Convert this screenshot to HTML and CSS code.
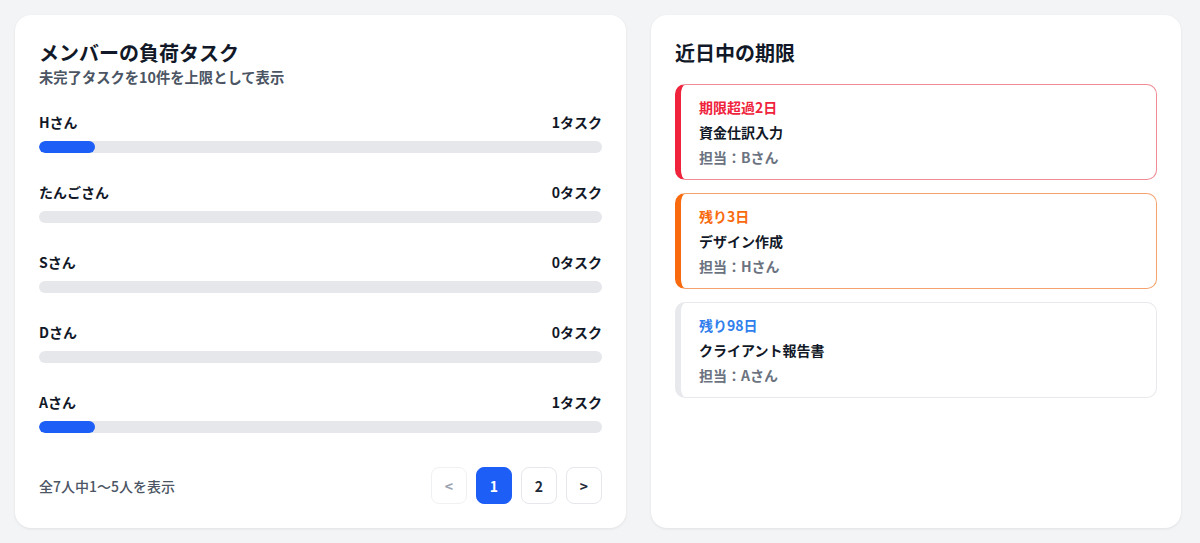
FILE: index.html
```html
<!DOCTYPE html>
<html lang="ja">
<head>
  <meta charset="utf-8">
  <title>ダッシュボード</title>
  <link rel="stylesheet" href="styles.css">
</head>
<body>
  <div class="dashboard">
    <section class="card workload">
      <h2 class="card-title">メンバーの負荷タスク</h2>
      <p class="card-sub">未完了タスクを10件を上限として表示</p>

      <div class="member-list">
        <div class="member">
          <div class="member-head"><span>Hさん</span><span>1タスク</span></div>
          <div class="bar"><div class="bar-fill" style="width: 10%"></div></div>
        </div>
        <div class="member">
          <div class="member-head"><span>たんごさん</span><span>0タスク</span></div>
          <div class="bar"><div class="bar-fill" style="width: 0%"></div></div>
        </div>
        <div class="member">
          <div class="member-head"><span>Sさん</span><span>0タスク</span></div>
          <div class="bar"><div class="bar-fill" style="width: 0%"></div></div>
        </div>
        <div class="member">
          <div class="member-head"><span>Dさん</span><span>0タスク</span></div>
          <div class="bar"><div class="bar-fill" style="width: 0%"></div></div>
        </div>
        <div class="member">
          <div class="member-head"><span>Aさん</span><span>1タスク</span></div>
          <div class="bar"><div class="bar-fill" style="width: 10%"></div></div>
        </div>
      </div>

      <div class="list-footer">
        <span class="count">全7人中1〜5人を表示</span>
        <div class="pager">
          <button class="page-btn" disabled>&lt;</button>
          <button class="page-btn active">1</button>
          <button class="page-btn">2</button>
          <button class="page-btn">&gt;</button>
        </div>
      </div>
    </section>

    <section class="card deadlines">
      <h2 class="card-title">近日中の期限</h2>
      <div class="deadline-list">
        <div class="deadline overdue">
          <div class="deadline-label">期限超過2日</div>
          <div class="deadline-task">資金仕訳入力</div>
          <div class="deadline-owner">担当：Bさん</div>
        </div>
        <div class="deadline soon">
          <div class="deadline-label">残り3日</div>
          <div class="deadline-task">デザイン作成</div>
          <div class="deadline-owner">担当：Hさん</div>
        </div>
        <div class="deadline later">
          <div class="deadline-label">残り98日</div>
          <div class="deadline-task">クライアント報告書</div>
          <div class="deadline-owner">担当：Aさん</div>
        </div>
      </div>
    </section>
  </div>
</body>
</html>
```

FILE: styles.css
```css
:root {
  --bg: #f3f4f6;
  --card-bg: #ffffff;
  --text: #111827;
  --muted: #4b5563;
  --blue: #1d5ef7;
  --track: #e5e7eb;
}

body {
  margin: 0;
  background-color: var(--bg);
  font-family: "Noto Sans CJK JP", "Noto Sans", sans-serif;
  color: var(--text);
}

.dashboard {
  display: grid;
  grid-template-columns: 611px 530px;
  gap: 25px;
  padding: 15px 19px 15px 15px;
  height: 513px;
}

.card {
  background-color: var(--card-bg);
  border-radius: 16px;
  padding: 24px;
  box-shadow: 0 1px 3px rgba(0, 0, 0, 0.08);
  display: flex;
  flex-direction: column;
}

.card-title {
  margin: 0;
  font-size: 20px;
  line-height: 28px;
  font-weight: 700;
}

.card-sub {
  margin: 0;
  font-size: 14.3px;
  line-height: 20px;
  font-weight: 600;
  color: var(--muted);
}

/* member workload */
.member-list {
  margin-top: 25px;
  display: flex;
  flex-direction: column;
  gap: 29px;
}

.member-head {
  display: flex;
  justify-content: space-between;
  font-size: 14px;
  line-height: 20px;
  font-weight: 700;
}

.bar {
  margin-top: 9px;
  height: 12px;
  background-color: var(--track);
  border-radius: 6px;
  overflow: hidden;
}

.bar-fill {
  height: 100%;
  background-color: var(--blue);
  border-radius: 6px;
}

.list-footer {
  margin-top: auto;
  display: flex;
  justify-content: space-between;
  align-items: center;
}

.count {
  font-size: 14px;
  color: var(--muted);
  font-weight: 500;
}

.pager {
  display: flex;
  gap: 9px;
}

.page-btn {
  width: 36px;
  height: 37px;
  border: 1px solid var(--track);
  border-radius: 8px;
  background-color: #fff;
  color: #1f2937;
  font-family: inherit;
  font-size: 14px;
  font-weight: 700;
  padding: 0;
}

.page-btn:disabled {
  color: #9ca3af;
  border-color: #f0f1f3;
}

.page-btn.active {
  background-color: var(--blue);
  border-color: var(--blue);
  color: #fff;
}

/* upcoming deadlines */
.deadline-list {
  margin-top: 17px;
  display: flex;
  flex-direction: column;
  gap: 13px;
}

.deadline {
  border: 1px solid var(--track);
  border-left-width: 6px;
  border-radius: 10px;
  padding: 12px 18px;
  display: flex;
  flex-direction: column;
  gap: 5px;
  font-size: 14px;
  line-height: 20px;
  font-weight: 700;
}

.deadline-owner {
  color: #6b7280;
}

.overdue {
  border-color: #f08a94;
  border-left-color: #ef233c;
}

.overdue .deadline-label {
  color: #ef233c;
}

.soon {
  border-color: #f5a36e;
  border-left-color: #f96a0e;
}

.soon .deadline-label {
  color: #f96a0e;
}

.later {
  border-color: #e8e9ec;
}

.later .deadline-label {
  color: #2f80ed;
}
```
